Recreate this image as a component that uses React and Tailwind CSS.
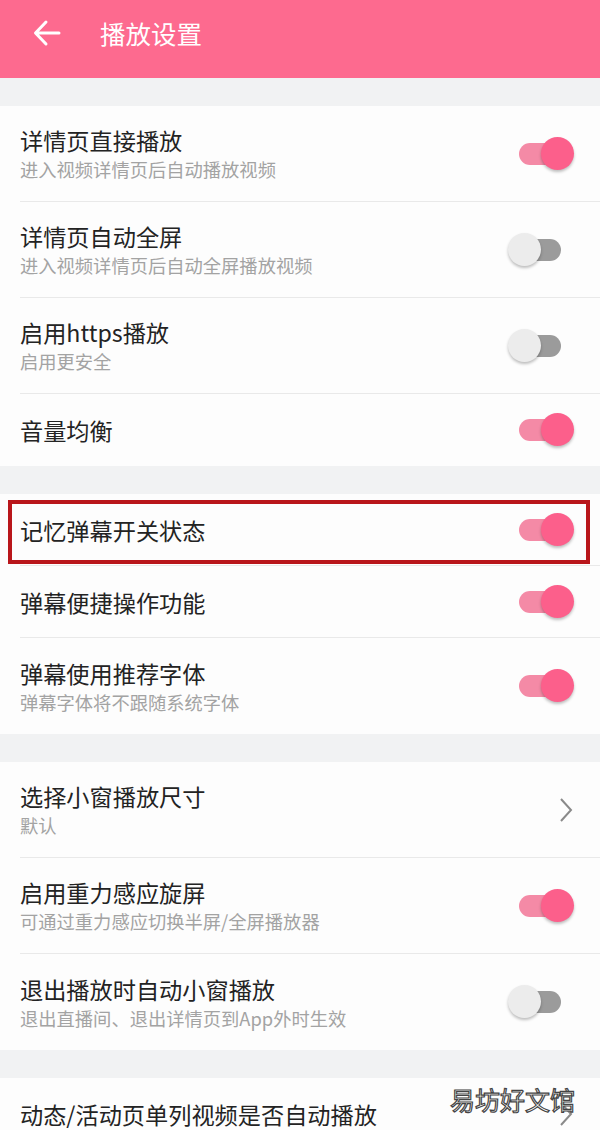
import React from 'react';

const FONT = { fontFamily: '"Noto Sans CJK SC", "Noto Sans", sans-serif' };

const Toggle = ({ on }) => (
    <div className="relative w-[66px] h-[34px] shrink-0">
        <div
            className={`absolute left-[11px] top-[6px] w-[42px] h-[22px] rounded-full ${
                on ? 'bg-[#f48aa6]' : 'bg-[#9b9b9b]'
            }`}
        />
        <div
            className={`absolute top-0 w-[33px] h-[33px] rounded-full shadow-[0_2px_3px_rgba(0,0,0,0.25)] ${
                on ? 'right-0 bg-[#fc5f8b]' : 'left-0 bg-[#ececec]'
            }`}
        />
    </div>
);

const Chevron = () => (
    <svg width="16" height="26" viewBox="0 0 16 26" className="mr-[26px]">
        <path d="M3 2 L13 13 L3 24" fill="none" stroke="#8a8a8a" strokeWidth="2" />
    </svg>
);

const Row = ({ title, sub, on, chevron, last, children }) => (
    <div className={`relative bg-[#fdfdfd] pl-5 ${sub ? 'h-[96px]' : 'h-[72px]'}`}>
        <div className={`flex items-center h-full ${last ? '' : 'border-b border-[#e9e9e9]'}`}>
            <div className="flex-1">
                <div className="text-[23.2px] leading-[30px] text-[#232323]">{title}</div>
                {sub && (
                    <div className="text-[18.3px] leading-[26px] text-[#a3a3a3] mt-[1px]">{sub}</div>
                )}
            </div>
            {chevron ? <Chevron /> : <div className="mr-[26px]"><Toggle on={on} /></div>}
        </div>
        {children}
    </div>
);

const Gap = () => <div className="h-[28px] bg-[#f1f2f3]" />;

export default function App() {
    return (
        <div className="relative w-[600px] h-[1130px] overflow-hidden bg-[#f1f2f3]" style={FONT}>
            {/* 顶栏 */}
            <div className="h-[78px] bg-[#fd6a8f] flex items-start pt-[13px] shadow-[0_1px_3px_rgba(0,0,0,0.12)]">
                <svg width="30" height="30" viewBox="0 0 30 30" className="ml-[32px] mt-[5px]">
                    <path d="M27 15 H4 M14 4 L3.5 15 L14 26" fill="none" stroke="#fff" strokeWidth="3" strokeLinecap="round" strokeLinejoin="round" />
                </svg>
                <div className="ml-[38px] text-[25.5px] leading-[40px] text-white">播放设置</div>
            </div>

            <Gap />
            <Row title="详情页直接播放" sub="进入视频详情页后自动播放视频" on />
            <Row title="详情页自动全屏" sub="进入视频详情页后自动全屏播放视频" />
            <Row title="启用https播放" sub="启用更安全" />
            <Row title="音量均衡" on last />

            <Gap />
            <Row title="记忆弹幕开关状态" on>
                <div className="absolute left-[8px] right-[10px] top-[6px] bottom-[2px] border-[4px] border-[#b9161b]" />
            </Row>
            <Row title="弹幕便捷操作功能" on />
            <Row title="弹幕使用推荐字体" sub="弹幕字体将不跟随系统字体" on last />

            <Gap />
            <Row title="选择小窗播放尺寸" sub="默认" chevron />
            <Row title="启用重力感应旋屏" sub="可通过重力感应切换半屏/全屏播放器" on />
            <Row title="退出播放时自动小窗播放" sub="退出直播间、退出详情页到App外时生效" last />

            <Gap />
            <Row title="动态/活动页单列视频是否自动播放" chevron last />

            {/* 水印 */}
            <div className="absolute right-[25px] top-[1084px] text-[25px] leading-[30px] text-white [-webkit-text-stroke:1.2px_#444]">
                易坊好文馆
            </div>
        </div>
    );
}
